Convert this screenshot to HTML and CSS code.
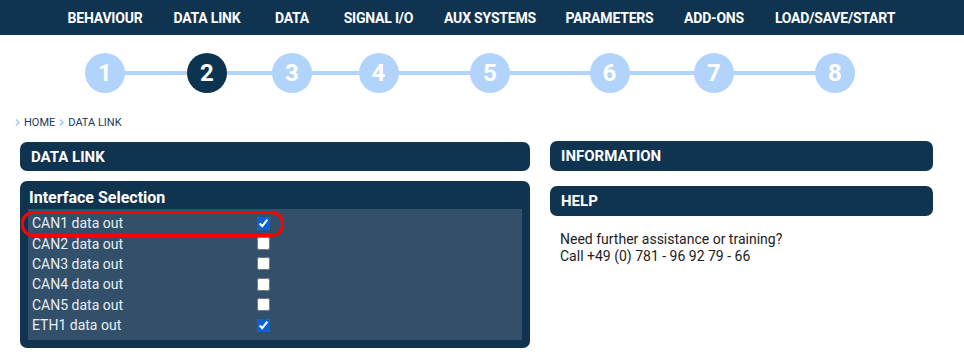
FILE: index.html
```html
<!DOCTYPE html>
<html lang="en">
<head>
<meta charset="UTF-8">
<title>Data Link</title>
<link rel="stylesheet" href="styles.css">
</head>
<body>

<!-- Main navigation -->
<div class="topnav">
<div class="cols">
<a class="nav-item">BEHAVIOUR</a>
<a class="nav-item">DATA LINK</a>
<a class="nav-item">DATA</a>
<a class="nav-item">SIGNAL I/O</a>
<a class="nav-item">AUX SYSTEMS</a>
<a class="nav-item">PARAMETERS</a>
<a class="nav-item">ADD-ONS</a>
<a class="nav-item">LOAD/SAVE/START</a>
</div>
</div>

<!-- Wizard steps -->
<div class="cols steps">
<div class="step"><span class="circle">1</span></div>
<div class="step"><span class="circle active">2</span></div>
<div class="step"><span class="circle">3</span></div>
<div class="step"><span class="circle">4</span></div>
<div class="step"><span class="circle">5</span></div>
<div class="step"><span class="circle">6</span></div>
<div class="step"><span class="circle">7</span></div>
<div class="step"><span class="circle">8</span></div>
</div>

<div class="breadcrumb">
<svg class="crumb-arrow" width="5" height="7" viewBox="0 0 5 7"><path d="M1 0.5 L4 3.5 L1 6.5" fill="none" stroke="#a9cdf5" stroke-width="1.6"/></svg>
<span>HOME</span>
<svg class="crumb-arrow" width="5" height="7" viewBox="0 0 5 7"><path d="M1 0.5 L4 3.5 L1 6.5" fill="none" stroke="#a9cdf5" stroke-width="1.6"/></svg>
<span>DATA LINK</span>
</div>

<div class="content">
<div class="left-col">
<div class="panel-head">DATA LINK</div>

<div class="panel">
<div class="panel-title">Interface Selection</div>
<div class="panel-body">
<label class="row"><span>CAN1 data out</span><input type="checkbox" checked></label>
<label class="row"><span>CAN2 data out</span><input type="checkbox"></label>
<label class="row"><span>CAN3 data out</span><input type="checkbox"></label>
<label class="row"><span>CAN4 data out</span><input type="checkbox"></label>
<label class="row"><span>CAN5 data out</span><input type="checkbox"></label>
<label class="row"><span>ETH1 data out</span><input type="checkbox" checked></label>
</div>
<!-- highlight marker -->
<div class="highlight"></div>
</div>
</div>

<div class="right-col">
<div class="panel-head">INFORMATION</div>
<div class="panel-head">HELP</div>
<p class="help-text">Need further assistance or training?<br>Call +49 (0) 781 - 96 92 79 - 66</p>
</div>
</div>

</body>
</html>
```

FILE: styles.css
```css
* {
margin: 0;
padding: 0;
box-sizing: border-box;
}

body {
font-family: Roboto, "Liberation Sans", sans-serif;
background: #fff;
color: #1f2d3a;
}

/* shared columns for nav + steps */
.cols {
display: grid;
grid-template-columns: 104px 100px 70px 103px 120px 119px 90px 152px;
justify-content: center;
}

.topnav {
background: #10344f;
height: 35px;
}

.nav-item {
display: flex;
align-items: center;
justify-content: center;
height: 35px;
color: #fff;
font-size: 14px;
font-weight: bold;
white-space: nowrap;
letter-spacing: -0.2px;
}

/* Steps */
.steps {
margin-top: 18px;
position: relative;
}

.steps::before {
content: '';
position: absolute;
top: 18px;
height: 4px;
left: calc(50% - 429px + 52px);
right: calc(50% - 429px + 76px);
background: #b2d4fc;
}

.step {
display: flex;
justify-content: center;
position: relative;
}

.circle {
width: 40px;
height: 40px;
border-radius: 50%;
background: #b2d4fc;
color: #fff;
font-weight: bold;
font-size: 24px;
display: flex;
align-items: center;
justify-content: center;
}

.circle.active {
background: #0c3350;
}

.breadcrumb {
display: flex;
align-items: center;
gap: 4px;
height: 14px;
margin-top: 22px;
padding-left: 15px;
font-size: 11px;
color: #1c3a55;
}

/* Main content */
.content {
display: grid;
grid-template-columns: 510px 383px;
gap: 20px;
padding-left: 20px;
margin-top: 12px;
}

.panel-head {
background: #10344f;
color: #fff;
font-weight: bold;
font-size: 15px;
height: 30px;
line-height: 30px;
padding-left: 11px;
border-radius: 7px;
}

.left-col .panel-head {
margin-top: 1px;
height: 29px;
}

.right-col .panel-head + .panel-head {
margin-top: 15px;
}

.panel {
margin-top: 10px;
background: #10344f;
border-radius: 7px;
padding: 0 8px 8px 8px;
position: relative;
}

.panel-title {
color: #fff;
font-weight: bold;
font-size: 16px;
height: 28px;
line-height: 20px;
padding: 7px 0 0 1px;
}

.panel-body {
background: #325069;
padding: 4px 0 5px 4px;
}

.row {
display: grid;
grid-template-columns: 225px 14px;
align-items: center;
height: 20.4px;
color: #e8eef4;
font-size: 14px;
}

.row input {
width: 13px;
height: 13px;
margin: 0;
accent-color: #0b60d6;
}

.highlight {
position: absolute;
left: 1px;
top: 30px;
width: 263px;
height: 26px;
border: 3px solid #f00;
border-radius: 12px;
}

.help-text {
padding: 15px 0 0 10px;
font-size: 14px;
line-height: 17px;
color: #222;
}
```
